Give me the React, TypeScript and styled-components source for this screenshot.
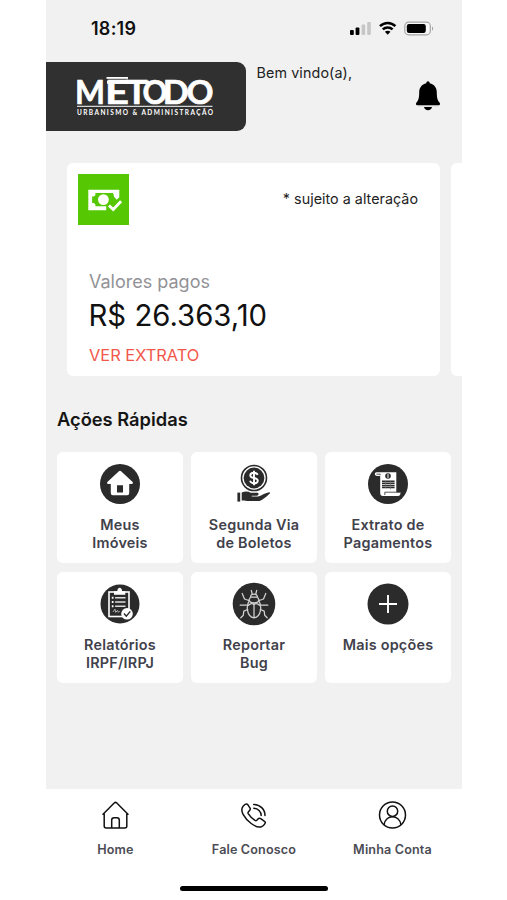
import React from "react";
import styled, { createGlobalStyle } from "styled-components";

const ink = "#2b2b2b";

const GlobalStyle = createGlobalStyle`
  * { box-sizing: border-box; }
  body { margin: 0; background: #fff; font-family: Inter, "Liberation Sans", sans-serif; }
`;

const Phone = styled.main`
  display: flex;
  flex-direction: column;
  width: 416px;
  height: 900px;
  margin-left: 46px;
  overflow: hidden;
  background: #f1f1f1;
`;

const StatusBar = styled.div`
  display: flex;
  justify-content: space-between;
  align-items: center;
  height: 62px;
  flex: none;
  padding: 0 28px 5px 45px;
`;

const Clock = styled.span`
  font-size: 18px;
  font-weight: 600;
  line-height: 22px;
  letter-spacing: 0.25px;
  color: #111;
`;

const Header = styled.header`
  display: flex;
  height: 69px;
  flex: none;
`;

const Brand = styled.div`
  width: 200px;
  height: 69px;
  background: #303030;
  border-radius: 0 9px 9px 0;
`;

const Welcome = styled.p`
  flex: 1;
  margin: 1px 0 0 10.5px;
  font-size: 14.3px;
  line-height: 20px;
  letter-spacing: 0.12px;
  color: #222;
`;

const Bell = styled.button`
  align-self: flex-start;
  margin: 19px 21px 0 0;
  padding: 0;
  border: 0;
  background: none;
  line-height: 0;
`;

const Carousel = styled.section`
  display: flex;
  gap: 11px;
  flex: none;
  margin-top: 32px;
  padding-left: 21px;
  overflow: hidden;
`;

const Card = styled.article`
  display: flex;
  flex-direction: column;
  flex: 0 0 373px;
  height: 213px;
  padding: 11px 22px 0 11px;
  border-radius: 6px;
  background: #fff;
`;

const CardTop = styled.div`
  display: flex;
  justify-content: space-between;
  height: 96px;
`;

const PaidBadge = styled.div`
  width: 51px;
  height: 51px;
  background: #56c803;
`;

const Note = styled.span`
  margin-top: 15px;
  font-size: 14.3px;
  line-height: 20px;
  letter-spacing: 0.03px;
  color: #222;
`;

const CardLabel = styled.span`
  margin-left: 11px;
  font-size: 18px;
  line-height: 24px;
  color: #929297;
`;

const Amount = styled.span`
  margin: 3px 0 0 10.5px;
  font-size: 29.3px;
  line-height: 38px;
  color: #111;
`;

const CardLink = styled.a`
  margin: 10px 0 0 11px;
  font-size: 16.4px;
  line-height: 20px;
  color: #f2574b;
`;

const SectionTitle = styled.h2`
  flex: none;
  margin: 31px 0 0 11px;
  font-size: 18.3px;
  font-weight: 600;
  line-height: 24px;
  color: #161616;
`;

const ActionGrid = styled.section`
  display: grid;
  grid-template-columns: repeat(3, 126px);
  grid-auto-rows: 111px;
  gap: 8.5px 8px;
  flex: none;
  margin: 21px 0 0 11px;
`;

const Action = styled.button`
  display: flex;
  flex-direction: column;
  align-items: center;
  padding: 10px 0 0;
  border: 0;
  border-radius: 6px;
  background: #fff;
  font-family: inherit;
`;

const ActionLabel = styled.span`
  margin-top: 10px;
  font-size: 14.4px;
  font-weight: 600;
  line-height: 18px;
  letter-spacing: 0.22px;
  white-space: pre-line;
  text-align: center;
  color: #41414b;
`;

const BottomBar = styled.footer`
  display: flex;
  flex-direction: column;
  align-items: center;
  justify-content: space-between;
  height: 111px;
  margin-top: auto;
  padding-bottom: 9px;
  background: #fff;
`;

const Tabs = styled.nav`
  display: grid;
  grid-template-columns: repeat(3, 138.5px);
`;

const Tab = styled.a`
  display: flex;
  flex-direction: column;
  align-items: center;
  padding-top: 11px;
`;

const TabLabel = styled.span`
  margin-top: 11px;
  font-size: 12.6px;
  font-weight: 600;
  line-height: 18px;
  letter-spacing: 0.15px;
  color: #4c4c55;
`;

const HomeIndicator = styled.div`
  width: 148px;
  height: 5px;
  border-radius: 3px;
  background: #000;
`;

const StatusIcons = () => (
  <svg width="84" height="16" viewBox="0 0 84 16">
    <rect x="0" y="9" width="3.8" height="5" rx="1" />
    <rect x="5.6" y="6.5" width="3.8" height="7.5" rx="1" />
    <g fill="#c6c6c6">
      <rect x="11.6" y="3.5" width="3.6" height="10.5" rx="1" />
      <rect x="17.2" y="1" width="3.6" height="13" rx="1" />
    </g>
    <g fill="none" stroke="#000" strokeWidth="2.5">
      <path d="M30 5.2C34.4.9 41 .9 45.4 5.2" />
      <path d="M32.8 8.4c2.7-2.6 7.1-2.6 9.8 0" />
    </g>
    <path d="M34.9 10.8c1.6-1.4 4-1.4 5.6 0l-2.8 3z" />
    <rect x="54.8" y="1.2" width="25.5" height="12.6" rx="3.8" fill="#f8f8f8" stroke="#a5a5a5" strokeWidth="1.2" />
    <rect x="56.8" y="3" width="19" height="9" rx="2.2" />
    <path d="M82 5.4c1.6.6 1.6 3.6 0 4.2z" fill="#a5a5a5" />
  </svg>
);

const wordmark = [
  { letter: "M", x: 29, width: 30 },
  { letter: "E", x: 59, width: 24 },
  { letter: "T", x: 80, width: 21.5 },
  { letter: "O", x: 96.5, width: 25 },
  { letter: "D", x: 116.8, width: 26 },
  { letter: "O", x: 140.5, width: 27 },
];

const Logo = () => (
  <svg width="200" height="69" viewBox="0 0 200 69" fill="#fff">
    <text
      y="42"
      fontFamily="Lato, sans-serif"
      fontSize="32.5"
      fontWeight="700"
      stroke="#fff"
      strokeWidth="0.6"
    >
      {wordmark.map(({ letter, x, width }) => (
        <tspan key={x} x={x} textLength={width} lengthAdjust="spacingAndGlyphs">
          {letter}
        </tspan>
      ))}
    </text>
    <rect x="60.5" y="15" width="21.5" height="1.8" />
    <rect x="61" y="18.6" width="42" height="3.2" />
    <rect x="31" y="43.8" width="135.5" height="1" />
    <text
      x="31"
      y="52.5"
      fontFamily="Lato, sans-serif"
      fontSize="6.5"
      fontWeight="700"
      textLength="136"
      lengthAdjust="spacing"
    >
      URBANISMO &amp; ADMINISTRAÇÃO
    </text>
  </svg>
);

const BellIcon = () => (
  <svg width="26" height="31" viewBox="0 0 26 31">
    <path d="M13 .3c1 0 1.7.8 1.7 1.9 4.5.9 7.1 4.5 7.1 9.1 0 6.4 1 8.3 2.7 10.2.8.8.7 2.7-.7 2.7H2.2c-1.4 0-1.5-1.9-.7-2.7 1.7-1.9 2.7-3.8 2.7-10.2 0-4.6 2.6-8.2 7.1-9.1 0-1.1.7-1.9 1.7-1.9z" />
    <path d="M3 24.7h20" stroke="#aaa" strokeWidth=".8" />
    <path d="M9 26h8c-.3 2-1.9 3.2-4 3.2S9.3 28 9 26z" />
  </svg>
);

const PaidIcon = () => (
  <svg width="51" height="51" viewBox="0 0 51 51">
    <path
      fill="#fff"
      fillRule="evenodd"
      d="M10.3 15.8h31v7.4l-2.6 2.5-2.6-3-1-3.6H17.4v1.5c0 1.4-1.3 2-3.3 2v6.3c2 0 3.3.6 3.3 2v1.3h10.8v4.1H10.3z"
    />
    <circle cx="25.4" cy="25.6" r="5.4" fill="#fff" />
    <path d="M31 31.5l4.2 4 7.9-8.2" fill="none" stroke="#fff" strokeWidth="2.8" />
  </svg>
);

const Disc = ({ r = 20, children }: { r?: number; children: React.ReactNode }) => (
  <svg width="44" height="44" viewBox="-22 -22 44 44">
    <circle r={r} fill={ink} />
    {children}
  </svg>
);

const HouseGlyph = () => (
  <Disc>
    <path
      fill="#fff"
      fillRule="evenodd"
      d="M-1.1-12.8q1.1-.8 2.2 0L12.4-2.3c1 .9.7 2.2-.7 2.2H9.2v9.4q0 2-2 2H-7.2q-2 0-2-2V-.1h-2.5c-1.4 0-1.7-1.3-.7-2.2zM-3 1.2v7.2h6V1.2z"
    />
  </Disc>
);

const CoinHandGlyph = () => (
  <svg width="44" height="44" viewBox="-22 -22 44 44">
    <circle cy="-6" r="12.5" fill="none" stroke={ink} strokeWidth="1.6" />
    <circle cy="-6" r="10.4" fill={ink} />
    <path
      d="M3.7-9.2C3-10.8 1.7-11.3 0-11.3c-2.2 0-3.7 1.1-3.7 2.7C-3.7-5 3.8-7.2 3.8-3.3 3.8-1.7 2.2-.7 0-.7c-2 0-3.4-.8-4-2.5M0-13.3V1.3"
      fill="none"
      stroke="#fff"
      strokeWidth="1.9"
    />
    <rect x="-16.6" y="8.6" width="2.8" height="9" fill={ink} />
    <path
      fill={ink}
      d="M-12.3 8.6c3.5-1.7 6.3-1.3 9 .1h6c2.7 0 2.5 2.8 0 3.1h-5v.8h6.5c3.8-1.1 7.6-4 11-4.3.8-.1 1.2.6.5 1.3-3.9 3.8-7.3 6.5-10.2 7.5H-4.4c-3.3 0-5-.8-7.9-.7z"
    />
  </svg>
);

const StatementGlyph = () => (
  <Disc>
    <path
      fill="#fff"
      d="M-11.4-11.7H8.3V8.2h4.1v1.1c0 1.8-.8 2.7-2.3 2.7H-5c-2 0-2.8-1.2-2.8-3V-8.1h-3.1c-3 0-2.8-3.6-.5-3.6z"
    />
    <path d="M-11.5-9.8h3.7v1M-3.2 11V8.2H12" fill="none" stroke={ink} strokeWidth=".8" />
    <circle cy="-8" r="2.8" fill={ink} />
    <path d="M0-9.9v3.8" stroke="#fff" />
    <path d="M-6-2.8H6.6M-6-.7H6.6M-6 1.4H6.6M-6 3.5H6.6" stroke={ink} strokeWidth="1.5" />
    <path d="M-2.2-3.5v7.8M2.4-3.5v9" stroke="#777" strokeWidth=".7" />
  </Disc>
);

const ReportGlyph = () => (
  <Disc r={19.5}>
    <rect x="-11" y="-12" width="20" height="24.5" fill="none" stroke="#fff" strokeWidth="1.6" />
    <path d="M-6-9.2v-3.6h3.3c0-4.7 4.8-4.7 4.8 0h3.2v3.6z" fill="#fff" />
    <path d="M-4.9-6.2H5.5M-4.9-2H5.5M-4.9 2.3H5.5" stroke="#ddd" strokeWidth="1.5" />
    <path d="M-8.2-6.3h1.7M-8.2-2h1.7M-8.2 2.2h1.7" stroke="#fff" strokeWidth="1.9" />
    <path d="M-7 8l2-2.8.7 3.2 1.8-2 .8 2 1.4-1.4" fill="none" stroke="#ccc" strokeWidth=".8" />
    <circle cx="7" cy="9.8" r="5.8" fill="#fff" />
    <path d="M4 9.5l2.3 2.6 4-4.7" fill="none" stroke={ink} strokeWidth="1.4" />
  </Disc>
);

const BugGlyph = () => (
  <Disc r={21.3}>
    <g fill="none" stroke="#d1d1d1" strokeWidth="1.25" strokeLinejoin="round" strokeLinecap="round">
      <path d="M-3.4-7c0-4 6.8-4 6.8 0L5-4.1 3.6-1.8C1.2-.9-1.2-.9-3.6-1.8L-5-4.1zM-3.4-7h6.8" />
      <path d="M-1.8-10l-.9-3.6M1.8-10l.9-3.6M0-1v14.6M-4.7-3C-7.8.7-7.9 12.8 0 13.8 7.9 12.8 7.8.7 4.7-3M-5.9 1.5C-3-.8-1-.8 0 1 1-.8 3-.8 5.9 1.5" />
      <path d="M-5.2-3.5l-4.3-1.5-2.3-5.5M5.2-3.5l4.3-1.5 2.3-5.5M-6.2 1.2h-7.6M6.2 1.2h7.6M-6.2 5.5l-4 1.7-.5 4-2.5 2.6M6.2 5.5l4 1.7.5 4 2.5 2.6" />
    </g>
  </Disc>
);

const PlusGlyph = () => (
  <Disc r={20.5}>
    <path d="M-9 0H9M0-9V9" stroke="#fff" strokeWidth="1.9" />
  </Disc>
);

const tabStroke = {
  fill: "none",
  stroke: "#111",
  strokeWidth: 1.5,
  strokeLinejoin: "round" as const,
  strokeLinecap: "round" as const,
};

const HomeIcon = () => (
  <svg width="30" height="30" viewBox="-14.5 -15 30 30" {...tabStroke}>
    <path d="M-12.5-.8L-1.3-12q1.3-1.2 2.6 0L12.5-.8M-11.300-2V11q0 2 2 2H9.300q2 0 2-2V-2M-3.8 12.8V5.2q0-2.4 2.4-2.4h2.8q2.4 0 2.4 2.4v7.6" />
  </svg>
);

const PhoneIcon = () => (
  <svg width="30" height="30" viewBox="-15 -15 30 30" {...tabStroke}>
    <path d="M-10.9-8.8l1.8-1.7q1.8-1.3 3 .3l2 3q1 1.7-.6 3l-1 1.1q-.6.7-.1 1.7Q-3.2 2.7 1 5.4q1 .6 1.8-.2l1.2-1.3q1.2-1.2 2.7-.3l3.800 2.7q1.5 1 .3 2.5-1.5 2.2-3.4 3C1.5 13.6-7.8 5.3-10.9-.6c-1.6-3.2-1.7-6.2 0-8.2z" />
    <path d="M-.3-10.6C6-10.6 11-5.7 11 .6M-.2-6.7C4-6.6 7.2-3.3 7.2.6" />
  </svg>
);

const AccountIcon = () => (
  <svg width="30" height="30" viewBox="-14.5 -15 30 30" {...tabStroke}>
    <circle r="13" />
    <circle cy="-3.8" r="5.2" />
    <path d="M-8.4 9.7C-7.1-.8 7.1-.8 8.4 9.7" />
  </svg>
);

const actions = [
  { label: "Meus\nImóveis", icon: <HouseGlyph /> },
  { label: "Segunda Via\nde Boletos", icon: <CoinHandGlyph /> },
  { label: "Extrato de\nPagamentos", icon: <StatementGlyph /> },
  { label: "Relatórios\nIRPF/IRPJ", icon: <ReportGlyph /> },
  { label: "Reportar\nBug", icon: <BugGlyph /> },
  { label: "Mais opções", icon: <PlusGlyph /> },
];

const tabs = [
  { label: "Home", icon: <HomeIcon /> },
  { label: "Fale Conosco", icon: <PhoneIcon /> },
  { label: "Minha Conta", icon: <AccountIcon /> },
];

export default function App() {
  return (
    <>
      <GlobalStyle />
      <Phone>
        <StatusBar>
          <Clock>18:19</Clock>
          <StatusIcons />
        </StatusBar>
        <Header>
          <Brand>
            <Logo />
          </Brand>
          <Welcome>Bem vindo(a),</Welcome>
          <Bell aria-label="Notificações">
            <BellIcon />
          </Bell>
        </Header>
        <Carousel>
          <Card>
            <CardTop>
              <PaidBadge>
                <PaidIcon />
              </PaidBadge>
              <Note>* sujeito a alteração</Note>
            </CardTop>
            <CardLabel>Valores pagos</CardLabel>
            <Amount>R$ 26.363,10</Amount>
            <CardLink>VER EXTRATO</CardLink>
          </Card>
          <Card />
        </Carousel>
        <SectionTitle>Ações Rápidas</SectionTitle>
        <ActionGrid>
          {actions.map(({ label, icon }) => (
            <Action key={label}>
              {icon}
              <ActionLabel>{label}</ActionLabel>
            </Action>
          ))}
        </ActionGrid>
        <BottomBar>
          <Tabs>
            {tabs.map(({ label, icon }) => (
              <Tab key={label}>
                {icon}
                <TabLabel>{label}</TabLabel>
              </Tab>
            ))}
          </Tabs>
          <HomeIndicator />
        </BottomBar>
      </Phone>
    </>
  );
}
